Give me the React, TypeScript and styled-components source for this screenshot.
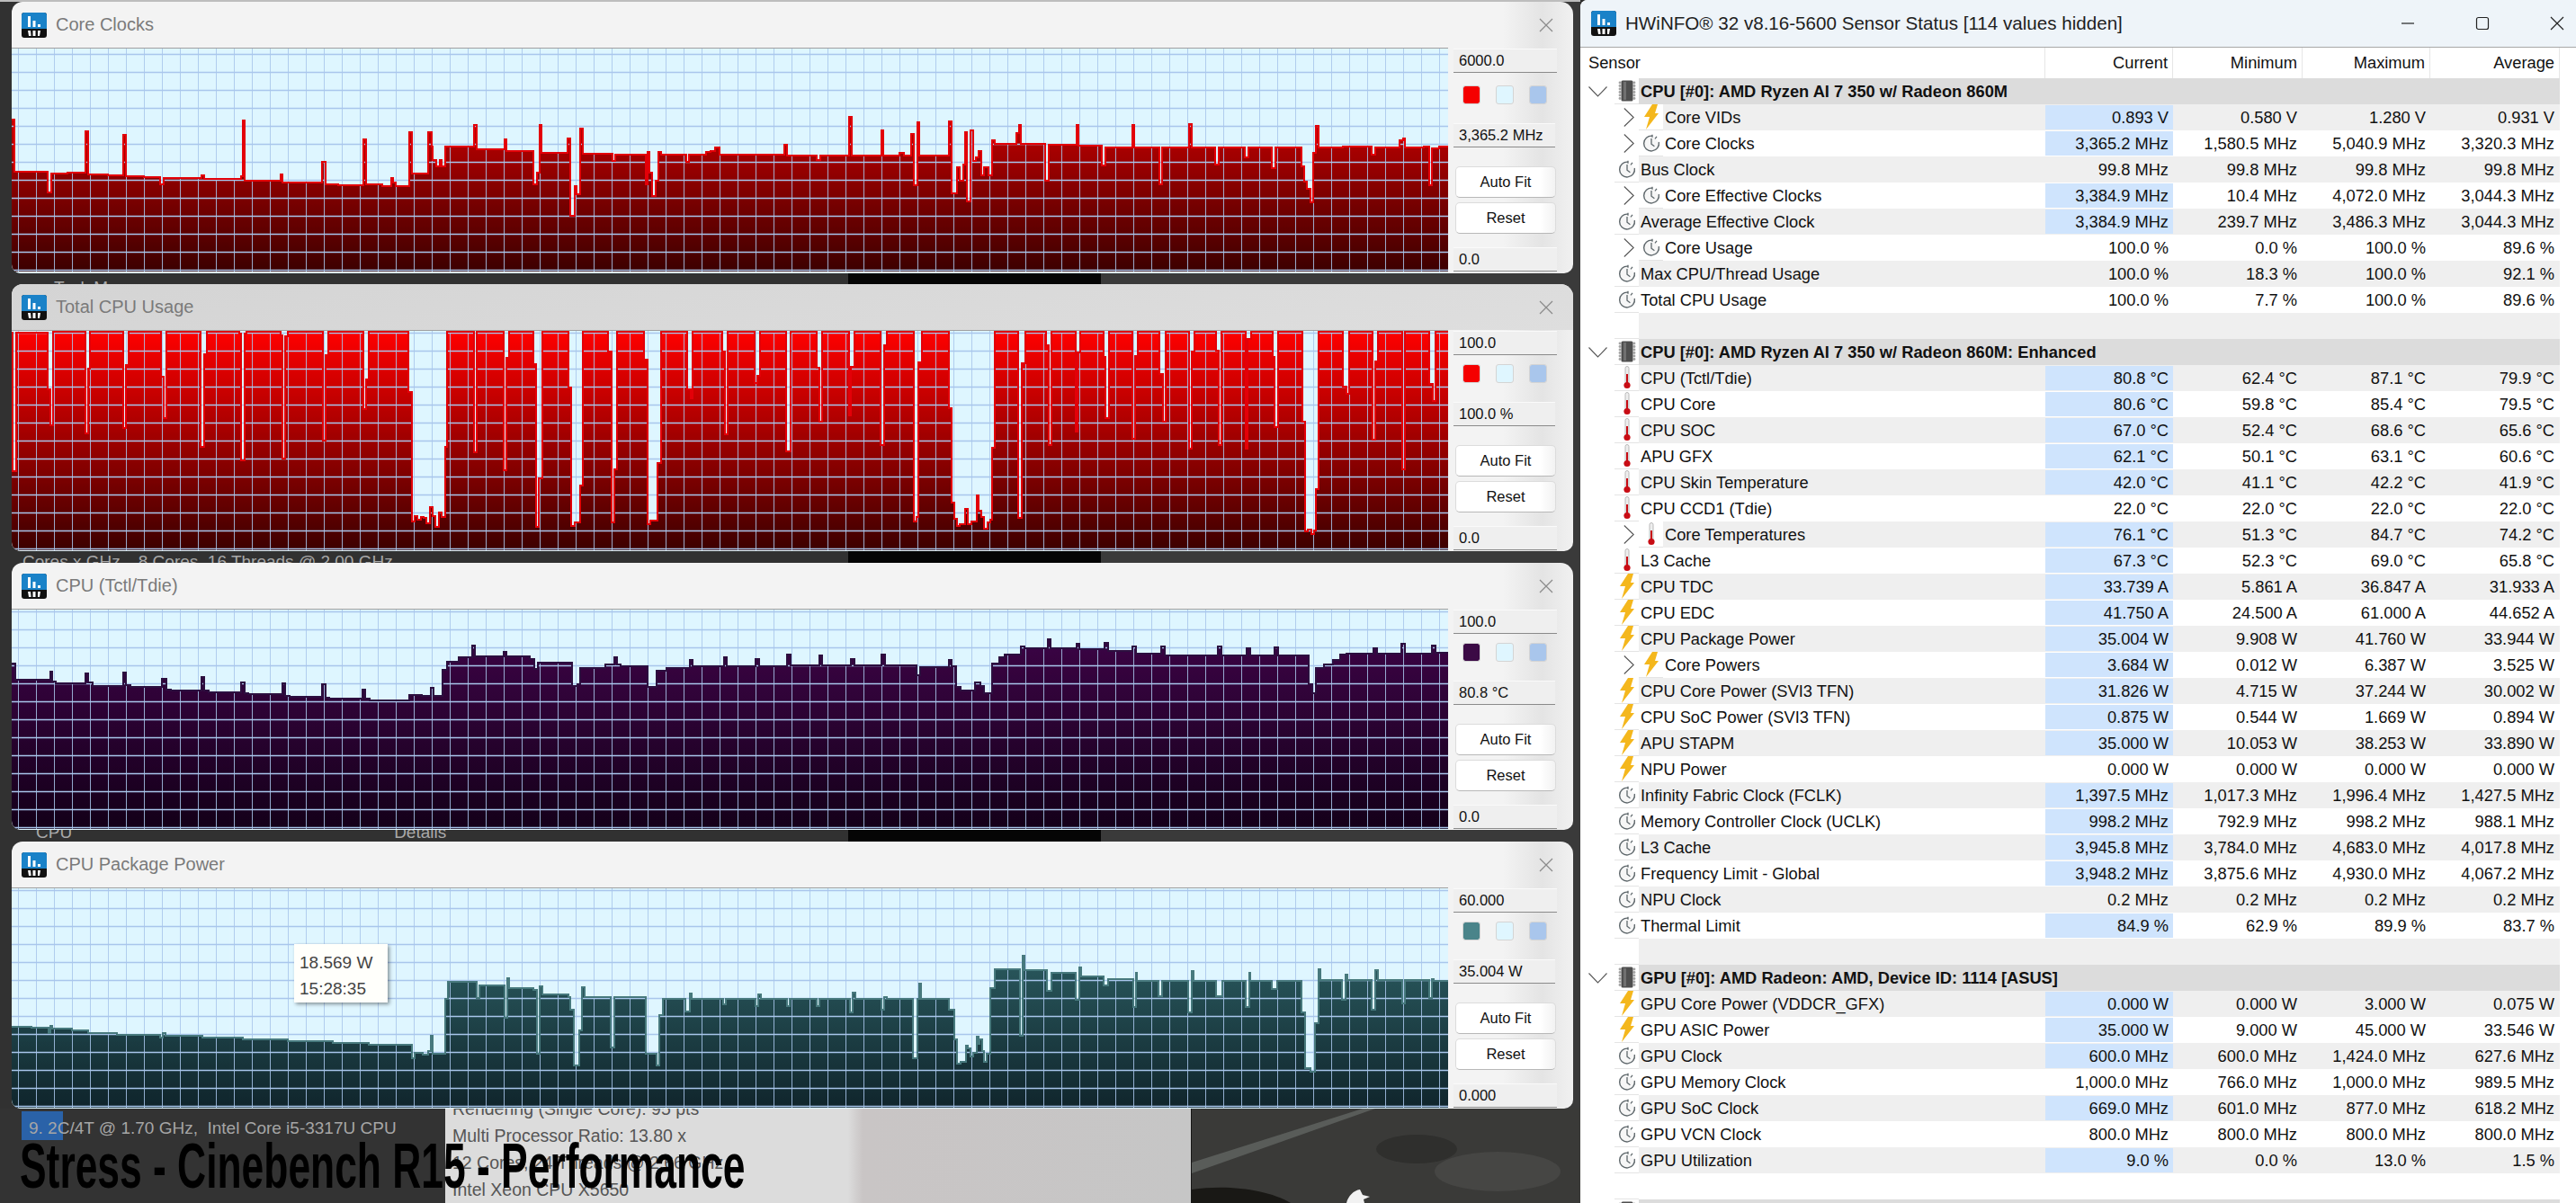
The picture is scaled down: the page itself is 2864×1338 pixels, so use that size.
import styled, { createGlobalStyle } from "styled-components";

type Step = [number, number];
type IconKind = "bolt" | "clock" | "temp";

const GlobalStyle = createGlobalStyle`
  html, body {
    margin: 0;
    padding: 0;
    background: #2c2c2c;
  }
  body {
    font-family: "Liberation Sans", Arial, sans-serif;
  }
`;

const Desktop = styled.div`
  position: relative;
  display: flex;
  width: 2864px;
  height: 1338px;
  overflow: hidden;
`;

const LeftColumn = styled.div`
  display: flex;
  flex-direction: column;
  width: 1757px;
  flex: none;
  border-top: 2px solid #bdbdbd;
  box-sizing: border-box;
  background: linear-gradient(
    90deg,
    #313131 0 943px,
    #050505 943px 1224px,
    #3a3a3a 1224px 100%
  );
`;

const Window = styled.div<{ $height: number }>`
  display: flex;
  flex-direction: column;
  flex: none;
  width: 1736px;
  height: ${(p) => p.$height}px;
  margin-left: 13px;
  overflow: hidden;
  border-radius: 12px 14px 10px 10px;
  background: linear-gradient(90deg, #f3f3f3 0 95.5%, #e4e4e4 98%, #f1f1f1 100%);
`;

const TitleBar = styled.div<{ $dim?: boolean }>`
  display: flex;
  align-items: center;
  flex: none;
  height: 51px;
  padding: 0 22px 0 11px;
  box-sizing: border-box;
  background: ${(p) =>
    p.$dim ? "linear-gradient(170deg, #d4d4d4, #dedede)" : "transparent"};
`;

const TitleText = styled.span`
  margin-left: 10px;
  flex: 1;
  font-size: 20px;
  color: #7a7a7a;
`;

const WindowBody = styled.div`
  display: flex;
  flex: 1;
  min-height: 0;
`;

const PlotBox = styled.div`
  position: relative;
  flex: none;
  width: 1597px;
  height: 100%;
  overflow: hidden;
  background: #dff6ff;
  border-top: 1px solid #a0a0a0;
  box-sizing: border-box;
`;

const Tooltip = styled.div`
  position: absolute;
  left: 314px;
  top: 62px;
  width: 104px;
  height: 65px;
  padding: 6px 6px;
  box-sizing: border-box;
  background: #fffffb;
  box-shadow: 2px 2px 4px rgba(0, 0, 0, 0.4);
  font-size: 19px;
  line-height: 29px;
  color: #444;
`;

const SidePanel = styled.div`
  display: flex;
  flex-direction: column;
  flex: none;
  width: 139px;
  padding-left: 6px;
  box-sizing: border-box;
`;

const ReadBox = styled.div<{ $width: number; $gap: number }>`
  display: flex;
  align-items: center;
  flex: none;
  width: ${(p) => p.$width}px;
  height: 27px;
  margin-top: ${(p) => p.$gap}px;
  padding-left: 6px;
  box-sizing: border-box;
  background: #efefef;
  border-bottom: 1px solid #8a8a8a;
  border-top: 1px solid #fafafa;
  font-size: 16.5px;
  color: #111;
`;

const SwatchRow = styled.div<{ $gap: number }>`
  display: flex;
  gap: 17px;
  margin: ${(p) => p.$gap}px 0 21px 10px;
`;

const Swatch = styled.div<{ $color: string }>`
  width: 20px;
  height: 21px;
  box-sizing: border-box;
  border: 1px solid #d4d4d4;
  border-radius: 3px;
  background: ${(p) => p.$color};
  background-clip: padding-box;
`;

const PanelButton = styled.button<{ $gap: number }>`
  flex: none;
  width: 112px;
  height: 35px;
  margin: ${(p) => p.$gap}px 0 0 2px;
  padding: 0;
  border: 1px solid #dcdcdc;
  border-bottom-color: #b8b8b8;
  border-radius: 5px;
  background: linear-gradient(90deg, #ffffff 85%, #f2f2f2);
  font-family: inherit;
  font-size: 16.5px;
  color: #111;
`;

const GapStrip = styled.div<{ $height: number }>`
  flex: none;
  display: flex;
  height: ${(p) => p.$height}px;
  padding-left: ${(p) => (p.$height === 12 ? 60 : 25)}px;
  gap: 20px;
  overflow: hidden;
  box-sizing: border-box;
  font-size: 19px;
  line-height: 24px;
  color: #a9a9a9;
  white-space: pre;
`;

const GhostLabel = styled.span<{ $left?: number; $shift?: number }>`
  margin-left: ${(p) => p.$left ?? 0}px;
  margin-top: ${(p) => p.$shift ?? 0}px;
`;

const BottomStrip = styled.div`
  display: flex;
  flex: 1;
  min-height: 0;
`;

const SpecPane = styled.div`
  flex: none;
  width: 495px;
  padding: 11px 0 0 32px;
  box-sizing: border-box;
  background: #333333;
  font-size: 19px;
  color: #a6a6a6;
  white-space: pre;
`;

const HighlightChunk = styled.span`
  position: relative;

  &::before {
    content: "";
    position: absolute;
    left: -8px;
    top: -8px;
    width: 46px;
    height: 32px;
    background: #2a62a8;
    z-index: 0;
  }
`;

const ChunkText = styled.span`
  position: relative;
`;

const ResultPane = styled.div`
  display: flex;
  flex-direction: column;
  justify-content: flex-end;
  flex: none;
  width: 829px;
  padding-left: 8px;
  box-sizing: border-box;
  overflow: hidden;
  background: linear-gradient(90deg, #dcdcdc 0 54%, #c9c5c5 56%, #c6c6c6 100%);
  font-size: 19.5px;
  color: #555;
`;

const ResultLine = styled.div`
  flex: none;
  height: 30px;
  line-height: 30px;
  white-space: nowrap;
`;

const PhotoPane = styled.div`
  flex: 1;
  min-width: 0;
  background: #3a3a38;
  border-left: 1px solid #161616;
`;

const BigTitle = styled.div`
  position: absolute;
  left: 22px;
  top: 1259px;
  font-size: 71px;
  line-height: 76px;
  font-weight: 700;
  color: #000;
  white-space: nowrap;
  transform: scaleX(0.625);
  transform-origin: left center;
`;

const SensorWindow = styled.div`
  display: flex;
  flex-direction: column;
  flex: 1;
  min-width: 0;
  background: #fff;
  border-radius: 8px 0 0 0;
  overflow: hidden;
`;

const SensorTitle = styled.div`
  display: flex;
  align-items: center;
  flex: none;
  height: 53px;
  padding: 0 13px 0 12px;
  box-sizing: border-box;
  background: #eef4f9;
  border-bottom: 1px solid #a8a8a8;
`;

const SensorTitleText = styled.span`
  flex: 1;
  margin-left: 10px;
  font-size: 20.6px;
  color: #1e1e1e;
  white-space: nowrap;
`;

const WinControls = styled.div`
  display: flex;
  align-items: center;
  gap: 67px;
`;

const columns = "65px 452px 142px 144px 142px 144px 18px";

const HeaderRow = styled.div`
  display: grid;
  grid-template-columns: ${columns};
  flex: none;
  height: 34px;
  font-size: 18.3px;
  color: #111;
`;

const HeaderCell = styled.div<{ $right?: boolean; $first?: boolean }>`
  display: flex;
  align-items: center;
  justify-content: ${(p) => (p.$right ? "flex-end" : "flex-start")};
  padding: 0 5px 0 ${(p) => (p.$first ? 9 : 0)}px;
  box-sizing: border-box;
  border-right: 1px solid #e6e6e6;
`;

const HeaderSpan = styled(HeaderCell)`
  grid-column: 1 / 3;
`;

const Row = styled.div<{ $shade?: boolean }>`
  display: grid;
  grid-template-columns: ${columns};
  flex: none;
  height: 29px;
  font-size: 18.3px;
  color: #111;
  white-space: nowrap;
  --row-bg: ${(p) => (p.$shade ? "#efefef" : "#ffffff")};
`;

const Gutter = styled.div`
  display: flex;
  align-items: center;
  justify-content: flex-end;
`;

const IconSlot = styled.div`
  display: flex;
  align-items: center;
  justify-content: center;
  flex: none;
  width: 27px;
  height: 100%;
  box-sizing: border-box;
  border-bottom: 1px solid #e4e4e4;
  background: #fff;
`;

const ExpandSlot = styled.div`
  display: flex;
  align-items: center;
  justify-content: center;
  flex: none;
  width: 22px;
`;

const NameCell = styled.div`
  display: flex;
  align-items: center;
  background: var(--row-bg);
  overflow: hidden;
`;

const NameText = styled.span`
  padding-left: 2px;
`;

const ValueCell = styled.div<{ $hot?: boolean; $pad: number }>`
  display: flex;
  align-items: center;
  justify-content: flex-end;
  padding-right: ${(p) => p.$pad}px;
  box-sizing: border-box;
  background: var(--row-bg);
  background-image: ${(p) =>
    p.$hot ? "linear-gradient(#cfe4fd, #cfe4fd)" : "none"};
  background-size: 100% calc(100% - 2px);
  background-position: 0 1px;
  background-repeat: no-repeat;
`;

const GroupGutter = styled.div`
  display: flex;
  align-items: center;
`;

const GroupChevron = styled.div`
  display: flex;
  justify-content: center;
  flex: none;
  width: 38px;
`;

const GroupName = styled.div`
  grid-column: 2 / 7;
  display: flex;
  align-items: center;
  padding-left: 2px;
  background: #dcdcdc;
  font-weight: 700;
`;

const coreClocks: Step[] = [
  [13, 132], [16, 190], [53, 213], [57, 192], [75, 191], [95, 145], [98, 193], [120, 194], [137, 149], [140, 195], [160, 196], [178, 204], [182, 197], [224, 194], [227, 198], [268, 195], [270, 133], [272, 200], [312, 193], [314, 202], [358, 179], [362, 204], [376, 205], [404, 154], [407, 204], [425, 206], [435, 197], [437, 202], [440, 206], [455, 146], [458, 192], [476, 146], [480, 162], [481, 177], [485, 184], [489, 177], [491, 184], [495, 162], [527, 138], [530, 165], [561, 154], [563, 167], [593, 204], [597, 191], [600, 138], [602, 169], [631, 153], [634, 239], [639, 206], [641, 215], [645, 142], [648, 170], [681, 178], [684, 171], [718, 204], [720, 168], [722, 191], [725, 217], [729, 200], [732, 168], [735, 171], [763, 179], [766, 171], [785, 168], [790, 167], [795, 163], [800, 171], [872, 160], [875, 172],
  [908, 177], [912, 172], [944, 129], [947, 172], [980, 144], [982, 172], [1000, 169], [1005, 172], [1013, 148], [1016, 205], [1020, 135], [1022, 172], [1055, 134], [1058, 214], [1064, 185], [1067, 200], [1071, 182], [1073, 146], [1075, 223], [1079, 144], [1082, 178], [1085, 174], [1088, 167], [1091, 194], [1094, 185], [1099, 194], [1103, 155], [1106, 159], [1130, 147], [1133, 138], [1135, 159], [1162, 200], [1166, 160], [1197, 138], [1199, 161], [1225, 183], [1229, 163], [1259, 138], [1261, 163], [1289, 204], [1292, 163], [1322, 137], [1325, 163], [1351, 182], [1355, 163], [1384, 174], [1388, 163], [1414, 186], [1418, 163], [1447, 184], [1450, 201], [1453, 209], [1457, 224], [1460, 169], [1463, 139], [1466, 163], [1493, 162], [1525, 171], [1529, 163], [1556, 155], [1560, 153], [1562, 163], [1583, 162], [1589, 205], [1592, 164], [1600, 162],
];

const cpuUsage: Step[] = [
  [13, 369], [14, 523], [18, 369], [53, 432], [56, 472], [59, 368], [95, 481], [98, 409], [100, 368], [137, 475], [140, 405], [143, 368], [179, 418], [182, 464], [185, 368], [223, 496], [227, 393], [230, 368], [266, 370], [268, 511], [272, 370], [274, 368], [312, 372], [314, 509], [317, 373], [320, 368], [359, 489], [362, 394], [365, 368], [404, 454], [407, 421], [410, 368], [454, 435], [458, 579], [461, 573], [464, 577], [468, 574], [471, 575], [474, 581], [478, 563], [481, 573], [484, 585], [488, 569], [491, 574], [495, 496], [497, 368], [527, 502], [530, 368], [560, 522], [563, 397], [566, 368], [593, 404], [596, 585], [599, 531], [603, 368], [632, 430], [635, 584], [639, 580], [645, 539], [648, 368], [676, 390], [680, 580], [683, 521], [686, 368],
  [716, 399], [720, 582], [723, 578], [731, 514], [735, 368], [764, 432], [768, 442], [770, 368], [803, 390], [806, 482], [809, 368], [839, 425], [842, 417], [845, 368], [874, 501], [879, 368], [908, 408], [911, 468], [914, 368], [944, 461], [946, 407], [950, 368], [979, 494], [983, 383], [986, 368], [1016, 579], [1019, 574], [1021, 402], [1025, 368], [1055, 453], [1058, 558], [1061, 576], [1064, 584], [1067, 582], [1073, 565], [1076, 582], [1080, 579], [1086, 550], [1088, 567], [1091, 574], [1094, 587], [1098, 580], [1101, 577], [1103, 497], [1106, 368], [1132, 575], [1136, 403], [1140, 368], [1163, 383], [1166, 494], [1169, 368], [1196, 479], [1198, 391], [1201, 368], [1227, 396], [1229, 464], [1233, 368], [1259, 487], [1262, 395], [1265, 368], [1289, 415], [1293, 468], [1296, 368], [1322, 498], [1325, 390], [1328, 368], [1352, 389], [1355, 494], [1358, 368], [1385, 498], [1387, 376], [1391, 368], [1415, 396], [1417, 474], [1421, 368], [1448, 468], [1451, 590], [1454, 588], [1458, 593], [1461, 589], [1463, 543], [1466, 368], [1493, 429], [1497, 437], [1500, 368], [1526, 488], [1529, 401], [1532, 368], [1559, 521], [1562, 368], [1589, 426], [1593, 445], [1596, 368],
];

const cpuTemp: Step[] = [
  [13, 737], [17, 755], [56, 746], [58, 757], [62, 759], [95, 748], [98, 758], [103, 762], [137, 747], [140, 761], [145, 763], [180, 754], [185, 766], [190, 767], [224, 752], [227, 767], [232, 769], [268, 758], [272, 770], [276, 771], [314, 759], [317, 773], [322, 774], [358, 760], [362, 775], [366, 776], [403, 766], [406, 776], [411, 778], [455, 772], [469, 773], [479, 764], [482, 773], [492, 744], [497, 735], [510, 730], [525, 717], [528, 729], [560, 724], [563, 729], [589, 732], [594, 743], [598, 736], [634, 736], [636, 762], [642, 760], [645, 742], [673, 738], [683, 730], [686, 738], [690, 740], [718, 740], [720, 763], [730, 745], [741, 742], [767, 733], [770, 740], [805, 730], [808, 740], [840, 732], [844, 740], [875, 727], [879, 739], [911, 728], [914, 739], [946, 732], [950, 739], [980, 727], [984, 739], [1019, 750], [1023, 741], [1055, 733], [1058, 740], [1063, 763], [1068, 767], [1084, 758], [1090, 762], [1094, 770], [1103, 737], [1111, 730], [1117, 727], [1135, 718], [1139, 720], [1165, 710], [1168, 720], [1197, 715], [1200, 721], [1228, 714], [1232, 723], [1259, 718], [1263, 726], [1291, 718], [1295, 728], [1354, 718], [1358, 728], [1386, 720], [1390, 728], [1417, 719], [1421, 728], [1448, 728], [1455, 760], [1459, 770], [1463, 742], [1472, 738], [1482, 733], [1490, 727], [1497, 726], [1527, 720], [1531, 726], [1558, 715], [1562, 726], [1592, 717], [1596, 725],
];

const packagePower: Step[] = [
  [13, 1141], [35, 1142], [54, 1148], [56, 1140], [58, 1143], [80, 1145], [98, 1148], [130, 1150], [178, 1153], [181, 1148], [184, 1151], [225, 1153], [270, 1155], [320, 1157], [370, 1159], [410, 1161], [458, 1176], [461, 1170], [470, 1172], [476, 1168], [479, 1151], [481, 1171], [495, 1110], [498, 1091], [530, 1109], [533, 1095], [561, 1131], [564, 1087], [566, 1098], [593, 1100], [597, 1171], [600, 1096], [603, 1105], [632, 1108], [634, 1122], [638, 1184], [644, 1145], [647, 1097], [650, 1108], [679, 1164], [683, 1108], [718, 1171], [730, 1184], [733, 1128], [737, 1110], [762, 1124], [767, 1104], [769, 1110], [804, 1116], [807, 1110], [840, 1118], [843, 1105], [846, 1110], [875, 1118], [878, 1110], [908, 1118], [911, 1110], [945, 1125], [948, 1103], [951, 1110], [980, 1122], [983, 1108], [986, 1110],
  [1015, 1176], [1020, 1110], [1022, 1093], [1024, 1110], [1055, 1122], [1061, 1155], [1064, 1182], [1068, 1180], [1074, 1162], [1076, 1165], [1079, 1174], [1082, 1170], [1086, 1152], [1088, 1160], [1089, 1155], [1092, 1168], [1094, 1180], [1097, 1171], [1101, 1098], [1106, 1077], [1134, 1151], [1137, 1062], [1139, 1078], [1164, 1101], [1169, 1081], [1196, 1111], [1200, 1075], [1202, 1085], [1227, 1095], [1232, 1088], [1260, 1119], [1263, 1081], [1264, 1090], [1288, 1107], [1292, 1090], [1321, 1125], [1325, 1079], [1327, 1090], [1352, 1107], [1359, 1090], [1385, 1119], [1389, 1081], [1390, 1090], [1414, 1099], [1420, 1090], [1447, 1125], [1451, 1187], [1457, 1191], [1462, 1137], [1466, 1077], [1468, 1089], [1492, 1111], [1496, 1083], [1498, 1089], [1525, 1122], [1529, 1078], [1532, 1089], [1559, 1115], [1562, 1089], [1589, 1109], [1592, 1088], [1594, 1090],
];

const PLOT_LEFT = 13;
const PLOT_RIGHT = 1610;

function stepPath(steps: Step[], top: number) {
  let d = `M0 ${steps[0][1] - top}`;
  steps.forEach(([x, y], i) => {
    const next = i + 1 < steps.length ? steps[i + 1][0] : PLOT_RIGHT;
    d += ` L${x - PLOT_LEFT} ${y - top} L${next - PLOT_LEFT} ${y - top}`;
  });
  return d;
}

function Plot(props: {
  id: string;
  steps: Step[];
  top: number;
  height: number;
  firstLine: number;
  stroke: string;
  fillTop: string;
  fillBottom: string;
}) {
  const w = PLOT_RIGHT - PLOT_LEFT;
  const line = stepPath(props.steps, props.top);
  const vLines: number[] = [];
  for (let x = 20; x < PLOT_RIGHT; x += 20) vLines.push(x - PLOT_LEFT + 0.5);
  const hLines: number[] = [];
  for (let y = props.firstLine; y < props.height; y += 20) hLines.push(y + 0.5);
  return (
    <svg width={w} height={props.height} style={{ display: "block" }}>
      <defs>
        <linearGradient id={props.id} gradientUnits="userSpaceOnUse" x1="0" y1="0" x2="0" y2={props.height}>
          <stop offset="0" stopColor={props.fillTop} />
          <stop offset="1" stopColor={props.fillBottom} />
        </linearGradient>
      </defs>
      <path d={`${line} L${w} ${props.height} L0 ${props.height} Z`} fill={`url(#${props.id})`} />
      <g stroke="#a9c6ec" strokeWidth="1" opacity="0.85">
        {vLines.map((x) => (
          <line key={x} x1={x} x2={x} y1="0" y2={props.height} />
        ))}
      </g>
      <g stroke="#a9c6ec" strokeWidth="1.3">
        {hLines.map((y) => (
          <line key={y} x1="0" x2={w} y1={y} y2={y} />
        ))}
      </g>
      <path d={line} fill="none" stroke={props.stroke} strokeWidth="2" />
    </svg>
  );
}

function Logo() {
  return (
    <svg width="28" height="28" viewBox="0 0 28 28" style={{ flex: "none" }}>
      <rect width="28" height="28" rx="3" fill="#111" />
      <path d="M3 0h22a3 3 0 0 1 3 3v15H0V3a3 3 0 0 1 3-3z" fill="#1a82c8" />
      <path d="M7 4h3v12H7zM12.5 9h3v7h-3zM18 13h3v3h-3z" fill="#fff" />
      <path d="M7 20h3l.6 6H8zM12.5 20h3v6h-3zM18 20h3l-1 6h-2z" fill="#fff" />
    </svg>
  );
}

function CloseGlyph(props: { color: string }) {
  return (
    <svg width="16" height="16" viewBox="0 0 16 16" style={{ flex: "none" }}>
      <path d="M1 1l14 14M15 1L1 15" stroke={props.color} strokeWidth="1.2" fill="none" />
    </svg>
  );
}

function Bolt() {
  return (
    <svg width="17" height="28" viewBox="0 0 17 28">
      <path d="M10 0h6l-3 10h4L3 28l4-14H1z" fill="#f4b71d" />
    </svg>
  );
}

function ClockIcon() {
  return (
    <svg width="20" height="21" viewBox="0 0 20 21">
      <path d="M11 2.2A8.4 8.4 0 1 0 18.3 9" fill="#f6f6f6" stroke="#5e676b" strokeWidth="1.4" />
      <path d="M11 .8v3M16 2.8l-2 2.6M10 5v6.2l3.4 2.6" fill="none" stroke="#5e676b" strokeWidth="1.3" />
    </svg>
  );
}

function ThermoIcon() {
  return (
    <svg width="10" height="26" viewBox="0 0 10 26">
      <rect x="3" y="0.5" width="4" height="20" rx="2" fill="#eeeeee" stroke="#b9b9b9" />
      <rect x="4" y="9" width="2" height="12" fill="#c80c14" />
      <circle cx="5" cy="21.5" r="3.6" fill="#c80c14" />
    </svg>
  );
}

function ChipIcon() {
  const pins = [3, 6.5, 10, 13.5, 17, 20.5];
  return (
    <svg width="20" height="24" viewBox="0 0 20 24">
      {pins.map((y) => (
        <g key={y} fill="#a2a2a2">
          <circle cx="2" cy={y} r="1.4" />
          <circle cx="18" cy={y} r="1.4" />
        </g>
      ))}
      <rect x="3.5" y="0.5" width="13" height="23" rx="1.5" fill="#4f4f4f" />
      <rect x="6" y="2" width="3" height="20" fill="#707070" />
    </svg>
  );
}

function ChevronDown() {
  return (
    <svg width="21" height="12" viewBox="0 0 21 12">
      <path d="M.5.5l10 10.5L20.5.5" fill="none" stroke="#555" strokeWidth="1.1" />
    </svg>
  );
}

function ChevronRight() {
  return (
    <svg width="12" height="21" viewBox="0 0 12 21">
      <path d="M.8.5l10.4 10L.8 20.5" fill="none" stroke="#555" strokeWidth="1.1" />
    </svg>
  );
}

function RowIcon(props: { kind: IconKind }) {
  if (props.kind === "bolt") return <Bolt />;
  if (props.kind === "clock") return <ClockIcon />;
  return <ThermoIcon />;
}

type PanelInfo = {
  title: string;
  height: number;
  dim?: boolean;
  max: string;
  current: string;
  min: string;
  swatch: string;
  steps: Step[];
  top: number;
  plotHeight: number;
  firstLine: number;
  stroke: string;
  fillTop: string;
  fillBottom: string;
  swatchGap: number;
};

const panels: PanelInfo[] = [
  { title: "Core Clocks", height: 302, max: "6000.0", current: "3,365.2 MHz", min: "0.0", swatch: "#f50000", steps: coreClocks, top: 53, plotHeight: 248, firstLine: 6, stroke: "#e30008", fillTop: "#ff0000", fillBottom: "#3c0000", swatchGap: 14 },
  { title: "Total CPU Usage", height: 297, dim: true, max: "100.0", current: "100.0 %", min: "0.0", swatch: "#f50000", steps: cpuUsage, top: 367, plotHeight: 244, firstLine: 2, stroke: "#e30008", fillTop: "#ff0000", fillBottom: "#3c0000", swatchGap: 10 },
  { title: "CPU (Tctl/Tdie)", height: 297, max: "100.0", current: "80.8 °C", min: "0.0", swatch: "#3b0a45", steps: cpuTemp, top: 677, plotHeight: 244, firstLine: 2, stroke: "#2c0f3f", fillTop: "#42054c", fillBottom: "#140019", swatchGap: 10 },
  { title: "CPU Package Power", height: 297, max: "60.000", current: "35.004 W", min: "0.000", swatch: "#4a848a", steps: packagePower, top: 987, plotHeight: 244, firstLine: 2, stroke: "#47797d", fillTop: "#357074", fillBottom: "#10252c", swatchGap: 10 },
];

function GraphWindow(props: { info: PanelInfo; tooltip?: boolean }) {
  const p = props.info;
  return (
    <Window $height={p.height}>
      <TitleBar $dim={p.dim}>
        <Logo />
        <TitleText>{p.title}</TitleText>
        <CloseGlyph color="#8a8a8a" />
      </TitleBar>
      <WindowBody>
        <PlotBox>
          <Plot
            id={`fill-${p.top}`}
            steps={p.steps}
            top={p.top}
            height={p.plotHeight}
            firstLine={p.firstLine}
            stroke={p.stroke}
            fillTop={p.fillTop}
            fillBottom={p.fillBottom}
          />
          {props.tooltip && (
            <Tooltip>
              18.569 W
              <br />
              15:28:35
            </Tooltip>
          )}
        </PlotBox>
        <SidePanel>
          <ReadBox $width={115} $gap={1}>{p.max}</ReadBox>
          <SwatchRow $gap={p.swatchGap}>
            <Swatch $color={p.swatch} />
            <Swatch $color="#dff6ff" />
            <Swatch $color="#a9c6ec" />
          </SwatchRow>
          <ReadBox $width={113} $gap={0}>{p.current}</ReadBox>
          <PanelButton $gap={21}>Auto Fit</PanelButton>
          <PanelButton $gap={5}>Reset</PanelButton>
          <ReadBox $width={115} $gap={15}>{p.min}</ReadBox>
        </SidePanel>
      </WindowBody>
    </Window>
  );
}

type SensorRow = {
  name: string;
  icon: IconKind;
  values: [string, string, string, string];
  hot?: boolean;
  expand?: boolean;
};

type SensorItem = { group: string } | { blank: true } | SensorRow;

const s = (
  name: string,
  icon: IconKind,
  unit: string,
  vals: [string, string, string, string],
  hot = true,
  expand = false
): SensorRow => ({
  name,
  icon,
  hot,
  expand,
  values: vals.map((v) => `${v} ${unit}`) as [string, string, string, string],
});

const sensors: SensorItem[] = [
  { group: "CPU [#0]: AMD Ryzen AI 7 350 w/ Radeon 860M" },
  s("Core VIDs", "bolt", "V", ["0.893", "0.580", "1.280", "0.931"], true, true),
  s("Core Clocks", "clock", "MHz", ["3,365.2", "1,580.5", "5,040.9", "3,320.3"], true, true),
  s("Bus Clock", "clock", "MHz", ["99.8", "99.8", "99.8", "99.8"], false),
  s("Core Effective Clocks", "clock", "MHz", ["3,384.9", "10.4", "4,072.0", "3,044.3"], true, true),
  s("Average Effective Clock", "clock", "MHz", ["3,384.9", "239.7", "3,486.3", "3,044.3"]),
  s("Core Usage", "clock", "%", ["100.0", "0.0", "100.0", "89.6"], false, true),
  s("Max CPU/Thread Usage", "clock", "%", ["100.0", "18.3", "100.0", "92.1"], false),
  s("Total CPU Usage", "clock", "%", ["100.0", "7.7", "100.0", "89.6"], false),
  { blank: true },
  { group: "CPU [#0]: AMD Ryzen AI 7 350 w/ Radeon 860M: Enhanced" },
  s("CPU (Tctl/Tdie)", "temp", "°C", ["80.8", "62.4", "87.1", "79.9"]),
  s("CPU Core", "temp", "°C", ["80.6", "59.8", "85.4", "79.5"]),
  s("CPU SOC", "temp", "°C", ["67.0", "52.4", "68.6", "65.6"]),
  s("APU GFX", "temp", "°C", ["62.1", "50.1", "63.1", "60.6"]),
  s("CPU Skin Temperature", "temp", "°C", ["42.0", "41.1", "42.2", "41.9"]),
  s("CPU CCD1 (Tdie)", "temp", "°C", ["22.0", "22.0", "22.0", "22.0"], false),
  s("Core Temperatures", "temp", "°C", ["76.1", "51.3", "84.7", "74.2"], true, true),
  s("L3 Cache", "temp", "°C", ["67.3", "52.3", "69.0", "65.8"]),
  s("CPU TDC", "bolt", "A", ["33.739", "5.861", "36.847", "31.933"]),
  s("CPU EDC", "bolt", "A", ["41.750", "24.500", "61.000", "44.652"]),
  s("CPU Package Power", "bolt", "W", ["35.004", "9.908", "41.760", "33.944"]),
  s("Core Powers", "bolt", "W", ["3.684", "0.012", "6.387", "3.525"], true, true),
  s("CPU Core Power (SVI3 TFN)", "bolt", "W", ["31.826", "4.715", "37.244", "30.002"]),
  s("CPU SoC Power (SVI3 TFN)", "bolt", "W", ["0.875", "0.544", "1.669", "0.894"]),
  s("APU STAPM", "bolt", "W", ["35.000", "10.053", "38.253", "33.890"]),
  s("NPU Power", "bolt", "W", ["0.000", "0.000", "0.000", "0.000"], false),
  s("Infinity Fabric Clock (FCLK)", "clock", "MHz", ["1,397.5", "1,017.3", "1,996.4", "1,427.5"]),
  s("Memory Controller Clock (UCLK)", "clock", "MHz", ["998.2", "792.9", "998.2", "988.1"]),
  s("L3 Cache", "clock", "MHz", ["3,945.8", "3,784.0", "4,683.0", "4,017.8"]),
  s("Frequency Limit - Global", "clock", "MHz", ["3,948.2", "3,875.6", "4,930.0", "4,067.2"]),
  s("NPU Clock", "clock", "MHz", ["0.2", "0.2", "0.2", "0.2"], false),
  s("Thermal Limit", "clock", "%", ["84.9", "62.9", "89.9", "83.7"]),
  { blank: true },
  { group: "GPU [#0]: AMD Radeon: AMD, Device ID: 1114 [ASUS]" },
  s("GPU Core Power (VDDCR_GFX)", "bolt", "W", ["0.000", "0.000", "3.000", "0.075"]),
  s("GPU ASIC Power", "bolt", "W", ["35.000", "9.000", "45.000", "33.546"]),
  s("GPU Clock", "clock", "MHz", ["600.0", "600.0", "1,424.0", "627.6"]),
  s("GPU Memory Clock", "clock", "MHz", ["1,000.0", "766.0", "1,000.0", "989.5"], false),
  s("GPU SoC Clock", "clock", "MHz", ["669.0", "601.0", "877.0", "618.2"]),
  s("GPU VCN Clock", "clock", "MHz", ["800.0", "800.0", "800.0", "800.0"], false),
  s("GPU Utilization", "clock", "%", ["9.0", "0.0", "13.0", "1.5"]),
  { blank: true },
  { group: "" },
];

const valuePads = [5, 6, 5, 6];

function SensorRows() {
  let count = 0;
  return (
    <>
      {sensors.map((item, i) => {
        if ("group" in item) {
          count = 0;
          return (
            <Row key={i}>
              <GroupGutter>
                <GroupChevron>
                  <ChevronDown />
                </GroupChevron>
                <IconSlot>
                  <ChipIcon />
                </IconSlot>
              </GroupGutter>
              <GroupName>{item.group}</GroupName>
            </Row>
          );
        }
        const shade = count % 2 === 0;
        count += 1;
        if ("blank" in item) {
          return (
            <Row key={i} $shade={shade}>
              <Gutter>
                <IconSlot />
              </Gutter>
              <NameCell />
              <ValueCell $pad={0} />
              <ValueCell $pad={0} />
              <ValueCell $pad={0} />
              <ValueCell $pad={0} />
            </Row>
          );
        }
        return (
          <Row key={i} $shade={shade}>
            <Gutter>
              {item.expand ? (
                <ExpandSlot>
                  <ChevronRight />
                </ExpandSlot>
              ) : (
                <IconSlot>
                  <RowIcon kind={item.icon} />
                </IconSlot>
              )}
            </Gutter>
            <NameCell>
              {item.expand && (
                <IconSlot>
                  <RowIcon kind={item.icon} />
                </IconSlot>
              )}
              <NameText>{item.name}</NameText>
            </NameCell>
            {item.values.map((v, j) => (
              <ValueCell key={j} $pad={valuePads[j]} $hot={j === 0 && item.hot}>
                {v}
              </ValueCell>
            ))}
          </Row>
        );
      })}
    </>
  );
}

function Photo() {
  return (
    <svg width="432" height="105" viewBox="0 0 432 105" style={{ display: "block" }}>
      <path d="M0 60L190 0h14L0 72z" fill="#6e7370" opacity="0.6" />
      <path d="M0 90c40-6 85 0 110 15H0z" fill="#191815" />
      <path d="M172 105c2-8 8-14 15-15l3 6 8 2-7 3 1 4z" fill="#f2f2f2" />
      <ellipse cx="250" cy="45" rx="45" ry="16" fill="#2f2f2d" />
      <ellipse cx="340" cy="70" rx="70" ry="22" fill="#464644" />
    </svg>
  );
}

export default function App() {
  return (
    <Desktop>
      <GlobalStyle />
      <LeftColumn>
        <GraphWindow info={panels[0]} />
        <GapStrip $height={12}>
          <GhostLabel $shift={4}>Task Manager</GhostLabel>
        </GapStrip>
        <GraphWindow info={panels[1]} />
        <GapStrip $height={13}>
          <GhostLabel>Cores x GHz</GhostLabel>
          <GhostLabel>8 Cores, 16 Threads @ 2.00 GHz</GhostLabel>
        </GapStrip>
        <GraphWindow info={panels[2]} />
        <GapStrip $height={13}>
          <GhostLabel $left={15} $shift={-9}>CPU</GhostLabel>
          <GhostLabel $left={338} $shift={-9}>Details</GhostLabel>
        </GapStrip>
        <GraphWindow info={panels[3]} tooltip />
        <BottomStrip>
          <SpecPane>
            <HighlightChunk>
              <ChunkText>9. 2C</ChunkText>
            </HighlightChunk>
            /4T @ 1.70 GHz,  Intel Core i5-3317U CPU
          </SpecPane>
          <ResultPane>
            <ResultLine>Rendering (Single Core): 95 pts</ResultLine>
            <ResultLine>Multi Processor Ratio: 13.80 x</ResultLine>
            <ResultLine>12 Cores, 24 Threads @ 2.66 GHz</ResultLine>
            <ResultLine>Intel Xeon CPU X5650</ResultLine>
          </ResultPane>
          <PhotoPane>
            <Photo />
          </PhotoPane>
        </BottomStrip>
      </LeftColumn>
      <SensorWindow>
        <SensorTitle>
          <Logo />
          <SensorTitleText>HWiNFO® 32 v8.16-5600 Sensor Status [114 values hidden]</SensorTitleText>
          <WinControls>
            <svg width="16" height="16" viewBox="0 0 16 16">
              <path d="M1 8h14" stroke="#222" strokeWidth="1.2" />
            </svg>
            <svg width="16" height="16" viewBox="0 0 16 16">
              <rect x="1.5" y="1.5" width="13" height="13" rx="2" fill="none" stroke="#222" strokeWidth="1.2" />
            </svg>
            <CloseGlyph color="#222" />
          </WinControls>
        </SensorTitle>
        <HeaderRow>
          <HeaderSpan $first>Sensor</HeaderSpan>
          <HeaderCell $right>Current</HeaderCell>
          <HeaderCell $right>Minimum</HeaderCell>
          <HeaderCell $right>Maximum</HeaderCell>
          <HeaderCell $right>Average</HeaderCell>
        </HeaderRow>
        <SensorRows />
      </SensorWindow>
      <BigTitle>Stress - Cinebench R15 - Performance</BigTitle>
    </Desktop>
  );
}
